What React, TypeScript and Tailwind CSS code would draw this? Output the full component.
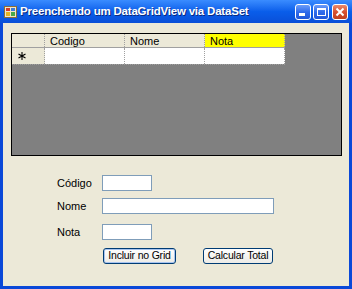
import React from "react";

const font = { fontFamily: '"Liberation Sans", Arial, sans-serif' };

const TitleButton = ({ kind }: { kind: "min" | "max" | "close" }) => {
  const bg =
    kind === "close"
      ? "bg-gradient-to-b from-[#E9896D] via-[#D8502F] to-[#C0401E]"
      : "bg-gradient-to-b from-[#6C9CF8] via-[#2F6BEB] to-[#2157D8]";
  return (
    <div className={`w-[16px] h-[16px] rounded-[3px] border border-white flex items-center justify-center ${bg}`}>
      {kind === "min" && <div className="w-[6px] h-[3px] bg-white self-end mb-[3px] mr-[3px]" />}
      {kind === "max" && <div className="w-[9px] h-[8px] border border-white border-t-[2px]" />}
      {kind === "close" && (
        <svg width="10" height="10" viewBox="0 0 10 10">
          <path d="M1.5 1.5 L8.5 8.5 M8.5 1.5 L1.5 8.5" stroke="white" strokeWidth="2" />
        </svg>
      )}
    </div>
  );
};

const AppIcon = () => (
  <svg width="13" height="12" viewBox="0 0 13 12">
    <rect x="0.5" y="0.5" width="12" height="11" fill="#F2E6C8" stroke="#8A6E3A" />
    <rect x="2" y="2" width="4" height="3" fill="#D63A2A" />
    <rect x="7" y="2" width="4" height="3" fill="#3C7BD8" />
    <rect x="2" y="6" width="4" height="4" fill="#E6B422" />
    <rect x="7" y="6" width="4" height="4" fill="#4AA84A" />
  </svg>
);

const TextBox = ({ width }: { width: string }) => (
  <div className={`${width} h-[16px] bg-white border border-[#7F9DB9]`} />
);

const XpButton = ({ label, width, focused }: { label: string; width: string; focused?: boolean }) => (
  <div
    className={`${width} h-[16px] rounded-[3px] border border-[#003C74] bg-gradient-to-b from-white to-[#ECEBE6] flex items-center justify-center text-[10.5px] tracking-[-0.2px] text-black ${
      focused ? "shadow-[inset_0_0_0_1px_#A8C4EF]" : ""
    }`}
  >
    {label}
  </div>
);

export default function App() {
  return (
    <div className="w-[352px] h-[289px] flex flex-col bg-[#0A48D8] overflow-hidden" style={font}>
      {/* Title bar */}
      <div className="h-[23px] flex items-center pl-[4px] pr-[4px] bg-gradient-to-b from-[#3A8CFF] via-[#0A5EEA] to-[#0A4FD8]">
        <AppIcon />
        <span className="ml-[3px] text-white font-bold text-[11.5px] tracking-[-0.2px] [text-shadow:1px_1px_0_#0A2A80]">
          Preenchendo um DataGridView via DataSet
        </span>
        <div className="ml-auto flex gap-[2px] mt-[1px]">
          <TitleButton kind="min" />
          <TitleButton kind="max" />
          <div className="ml-[1px]">
            <TitleButton kind="close" />
          </div>
        </div>
      </div>

      {/* Client area */}
      <div className="flex-1 mx-[3px] mb-[3px] bg-[#ECE9D8] pl-[8px] pt-[10px] text-[11px] text-black">
        {/* DataGridView */}
        <div className="w-[331px] h-[123px] border border-black bg-[#808080]">
          <div className="flex h-[14px] bg-[#ECE9D8] w-[273px] border-b border-[#A0A0A0]">
            <div className="w-[33px] border-r border-dotted border-[#A0A0A0]" />
            <div className="w-[80px] pl-[5px] leading-[14px] border-r border-dotted border-[#A0A0A0]">Codigo</div>
            <div className="w-[80px] pl-[5px] leading-[14px] border-r border-dotted border-[#A0A0A0]">Nome</div>
            <div className="w-[80px] pl-[5px] leading-[14px] bg-[#FFFF00] border-r border-dotted border-[#A0A0A0]">Nota</div>
          </div>
          <div className="flex h-[17px] w-[273px] border-b border-dotted border-[#A0A0A0]">
            <div className="w-[33px] bg-[#ECE9D8] border-r border-dotted border-[#A0A0A0] flex items-center pl-[6px]">
              <svg width="8" height="8" viewBox="0 0 8 8">
                <path d="M4 0 V8 M0.5 2 L7.5 6 M7.5 2 L0.5 6" stroke="black" strokeWidth="1.1" />
              </svg>
            </div>
            <div className="w-[80px] bg-white border-r border-dotted border-[#A0A0A0]" />
            <div className="w-[80px] bg-white border-r border-dotted border-[#A0A0A0]" />
            <div className="w-[80px] bg-white border-r border-dotted border-[#A0A0A0]" />
          </div>
        </div>

        {/* Fields */}
        <div className="mt-[19px] flex items-center">
          <span className="w-[91px] pl-[46px]">Código</span>
          <TextBox width="w-[50px]" />
        </div>
        <div className="mt-[6px] flex items-center">
          <span className="w-[91px] pl-[46px]">Nome</span>
          <TextBox width="w-[172px]" />
        </div>
        <div className="mt-[10px] flex items-center">
          <span className="w-[91px] pl-[46px]">Nota</span>
          <TextBox width="w-[50px]" />
        </div>
        <div className="mt-[7px] flex items-center pl-[92px]">
          <XpButton label="Incluir no Grid" width="w-[73px]" focused />
          <div className="ml-[27px]">
            <XpButton label="Calcular Total" width="w-[70px]" />
          </div>
        </div>
      </div>
    </div>
  );
}
